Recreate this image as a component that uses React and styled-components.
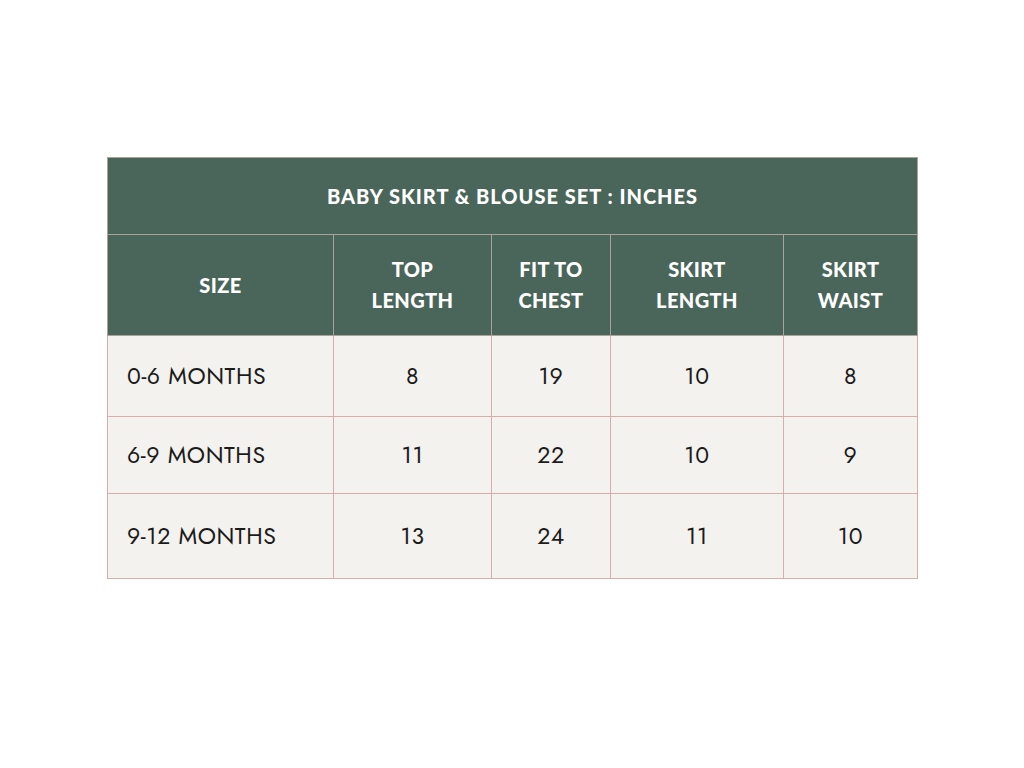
import React from 'react';
import styled, { createGlobalStyle } from 'styled-components';

const GlobalStyle = createGlobalStyle`
  html, body {
    margin: 0;
    padding: 0;
    background: #ffffff;
  }
`;

const columns = [226, 158, 119, 173, 134];

const headings = [
  ['SIZE'],
  ['TOP', 'LENGTH'],
  ['FIT TO', 'CHEST'],
  ['SKIRT', 'LENGTH'],
  ['SKIRT', 'WAIST'],
];

const rows = [
  { size: '0-6 MONTHS', values: ['8', '19', '10', '8'], height: 80 },
  { size: '6-9 MONTHS', values: ['11', '22', '10', '9'], height: 76 },
  { size: '9-12 MONTHS', values: ['13', '24', '11', '10'], height: 84 },
];

const Page = styled.div`
  width: 1024px;
  height: 768px;
  box-sizing: border-box;
  padding: 157px 107px 0 107px;
`;

const Table = styled.table`
  width: 810px;
  border-collapse: collapse;
  table-layout: fixed;
`;

const TitleCell = styled.th`
  height: 76px;
  padding: 0;
  background: #4a665a;
  color: #ffffff;
  font-family: 'Lato', 'Liberation Sans', sans-serif;
  font-weight: 900;
  font-size: 20px;
  letter-spacing: 1px;
  text-align: center;
  border: 1px solid #a9a399;
`;

const HeadCell = styled.th`
  height: 100px;
  padding: 0;
  background: #4a665a;
  color: #ffffff;
  font-family: 'Lato', 'Liberation Sans', sans-serif;
  font-weight: 900;
  font-size: 20px;
  letter-spacing: 0.4px;
  line-height: 31px;
  text-align: center;
  border: 1px solid #a9a399;
`;

const BodyCell = styled.td`
  height: ${(p) => p.$height}px;
  padding: ${(p) => (p.$first ? '0 0 0 19px' : '0')};
  background: #f3f2ee;
  color: #1b1b1b;
  font-family: 'Jost', 'Lato', 'Liberation Sans', sans-serif;
  font-weight: 400;
  font-size: 23px;
  letter-spacing: 0.6px;
  text-align: ${(p) => (p.$first ? 'left' : 'center')};
  border: 1px solid #d8aeaa;
`;

const BodyRow = styled.tr``;

export default function App() {
  return (
    <>
      <GlobalStyle />
      <Page>
        <Table>
          <colgroup>
            {columns.map((w, i) => (
              <col key={i} style={{ width: w }} />
            ))}
          </colgroup>
          <thead>
            <tr>
              <TitleCell colSpan={5}>BABY SKIRT &amp; BLOUSE SET : INCHES</TitleCell>
            </tr>
            <tr>
              {headings.map((lines, i) => (
                <HeadCell key={i}>
                  {lines.map((l, j) => (
                    <div key={j}>{l}</div>
                  ))}
                </HeadCell>
              ))}
            </tr>
          </thead>
          <tbody>
            {rows.map((r) => (
              <BodyRow key={r.size}>
                <BodyCell $first $height={r.height}>
                  {r.size}
                </BodyCell>
                {r.values.map((v, i) => (
                  <BodyCell key={i} $height={r.height}>
                    {v}
                  </BodyCell>
                ))}
              </BodyRow>
            ))}
          </tbody>
        </Table>
      </Page>
    </>
  );
}
